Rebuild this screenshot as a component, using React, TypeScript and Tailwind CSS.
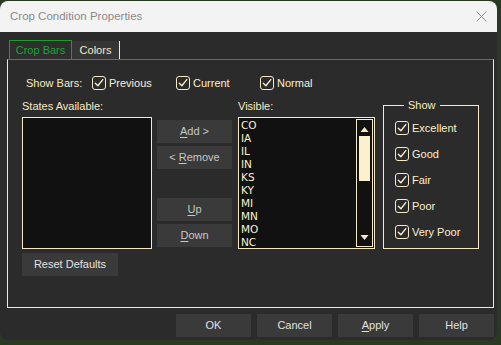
import type { ReactNode } from 'react'

const CREAM = '#f6eac6'

function Check({ label }: { label: string }) {
  return (
    <div className="flex items-center h-[14px]">
      <span className="w-[14px] h-[14px] rounded-[3px] border border-[#f6eac6] flex items-center justify-center shrink-0">
        <svg width="12" height="12" viewBox="0 0 12 12">
          <path d="M2.3 6.2 L4.9 8.8 L9.8 2.6" fill="none" stroke={CREAM} strokeWidth="1.4" strokeLinecap="round" strokeLinejoin="round" />
        </svg>
      </span>
      <span className="ml-[3px] text-[11px] leading-[14px] text-[#fbf0d0]">{label}</span>
    </div>
  )
}

function SideButton({ children, className = '' }: { children: ReactNode; className?: string }) {
  return (
    <div className={'w-[75px] h-[23px] bg-[#3a3a3a] flex items-center justify-center text-[11px] text-[#c6c6c6] whitespace-pre ' + className}>
      {children}
    </div>
  )
}

function Ul({ children }: { children: ReactNode }) {
  return <span className="underline underline-offset-[2px] decoration-1">{children}</span>
}

const states = ['CO', 'IA', 'IL', 'IN', 'KS', 'KY', 'MI', 'MN', 'MO', 'NC']

export default function App() {
  return (
    <div
      className="w-[501px] h-[345px] overflow-hidden bg-[#2a3a22] pt-[1px]"
      style={{ fontFamily: '"Liberation Sans", Arial, sans-serif' }}
    >
      <div className="w-[497px] h-[339px] rounded-[8px] overflow-hidden flex flex-col bg-[#2b2b2b]">
        {/* title bar */}
        <div className="h-[31px] bg-[#f3f3f3] flex items-center justify-between pl-[10px] pr-[10px]">
          <span className="text-[11.5px] text-[#8a8a8a]">Crop Condition Properties</span>
          <svg width="11" height="11" viewBox="0 0 11 11">
            <path d="M0.5 0.5 L10.5 10.5 M10.5 0.5 L0.5 10.5" stroke="#8c8c8c" strokeWidth="1" />
          </svg>
        </div>

        <div className="flex flex-col pl-[7px] pt-[8px]">
          {/* tabs */}
          <div className="flex items-end h-[19px] ml-[2px]">
            <div className="w-[63px] h-[19px] border border-b-0 border-[#1e9a2e] bg-[#2e2e2e] flex items-center justify-center text-[11px] text-[#1fa236]">
              Crop Bars
            </div>
            <div className="w-[48px] h-[18px] bg-[#353535] border-r border-[#f6eac6] flex items-center justify-center text-[11px] text-[#f6eac6]">
              Colors
            </div>
          </div>

          {/* panel */}
          <div className="w-[487px] h-[249px] border-t border-t-[#1e9a2e] border-x border-b border-x-[#f6eac6] border-b-[#f6eac6] flex flex-col">
            <div className="flex items-center h-[14px] mt-[16px] pl-[18px] text-[11px] text-[#f6eac6]">
              <span className="w-[66px]">Show Bars:</span>
              <div className="w-[84px]"><Check label="Previous" /></div>
              <div className="w-[84px]"><Check label="Current" /></div>
              <Check label="Normal" />
            </div>

            <div className="flex mt-[7px] pl-[14px]">
              {/* states available */}
              <div className="w-[130px] flex flex-col">
                <div className="h-[20px] pt-[2px] text-[11px] leading-[14px] text-[#f6eac6]">States Available:</div>
                <div className="h-[132px] border border-[#f6eac6] bg-[#111111]" />
                <div className="mt-[4px] w-[96px] h-[23px] bg-[#3a3a3a] flex items-center justify-center text-[11px] text-[#e2e2e2]">
                  Reset Defaults
                </div>
              </div>

              {/* move buttons */}
              <div className="ml-[5px] w-[75px] pt-[23px] flex flex-col">
                <SideButton><Ul>A</Ul>{'dd >'}</SideButton>
                <SideButton className="mt-[3px]">{'< '}<Ul>R</Ul>emove</SideButton>
                <SideButton className="mt-[29px]"><Ul>U</Ul>p</SideButton>
                <SideButton className="mt-[3px]"><Ul>D</Ul>own</SideButton>
              </div>

              {/* visible */}
              <div className="ml-[6px] w-[137px] flex flex-col">
                <div className="h-[20px] pt-[2px] text-[11px] leading-[14px] text-[#f6eac6]">Visible:</div>
                <div className="h-[132px] border border-[#f6eac6] bg-[#111111] flex">
                  <div
                    className="flex-1 pl-[2px] pt-[1px] overflow-hidden text-[10.5px] leading-[13px] text-[#fbf0d0]"
                    style={{ fontFamily: '"DejaVu Sans", sans-serif' }}
                  >
                    {states.map((s) => (
                      <div key={s}>{s}</div>
                    ))}
                  </div>
                  <div className="w-[17px] mt-[1px] mb-[1px] mr-[1px] border border-[#f6eac6] bg-[#111111] flex flex-col items-center">
                    <svg width="9" height="14" viewBox="0 0 9 14" className="mt-[2px]">
                      <path d="M0.5 10 L4.5 5 L8.5 10 Z" fill={CREAM} />
                    </svg>
                    <div className="w-[11px] h-[45px] bg-[#fdf0cc]" />
                    <div className="flex-1" />
                    <svg width="9" height="12" viewBox="0 0 9 12" className="mb-[3px]">
                      <path d="M0.5 4 L8.5 4 L4.5 9 Z" fill={CREAM} />
                    </svg>
                  </div>
                </div>
              </div>

              {/* show group */}
              <fieldset className="ml-[8px] mt-[1px] w-[96px] h-[151px] border border-[#f6eac6] pl-[11px] pt-[9px] flex flex-col gap-[12px]">
                <legend className="ml-[9px] px-[4px] text-[11px] leading-[14px] text-[#f6eac6]">Show</legend>
                <Check label="Excellent" />
                <Check label="Good" />
                <Check label="Fair" />
                <Check label="Poor" />
                <Check label="Very Poor" />
              </fieldset>
            </div>
          </div>

          {/* dialog buttons */}
          <div className="flex justify-end gap-[6px] mt-[6px] pr-[3px] text-[11px] text-[#e0e0e0]">
            <div className="w-[75px] h-[23px] bg-[#3a3a3a] flex items-center justify-center">OK</div>
            <div className="w-[75px] h-[23px] bg-[#3a3a3a] flex items-center justify-center">Cancel</div>
            <div className="w-[75px] h-[23px] bg-[#3a3a3a] flex items-center justify-center"><Ul>A</Ul>pply</div>
            <div className="w-[75px] h-[23px] bg-[#3a3a3a] flex items-center justify-center">Help</div>
          </div>
        </div>
      </div>
    </div>
  )
}
